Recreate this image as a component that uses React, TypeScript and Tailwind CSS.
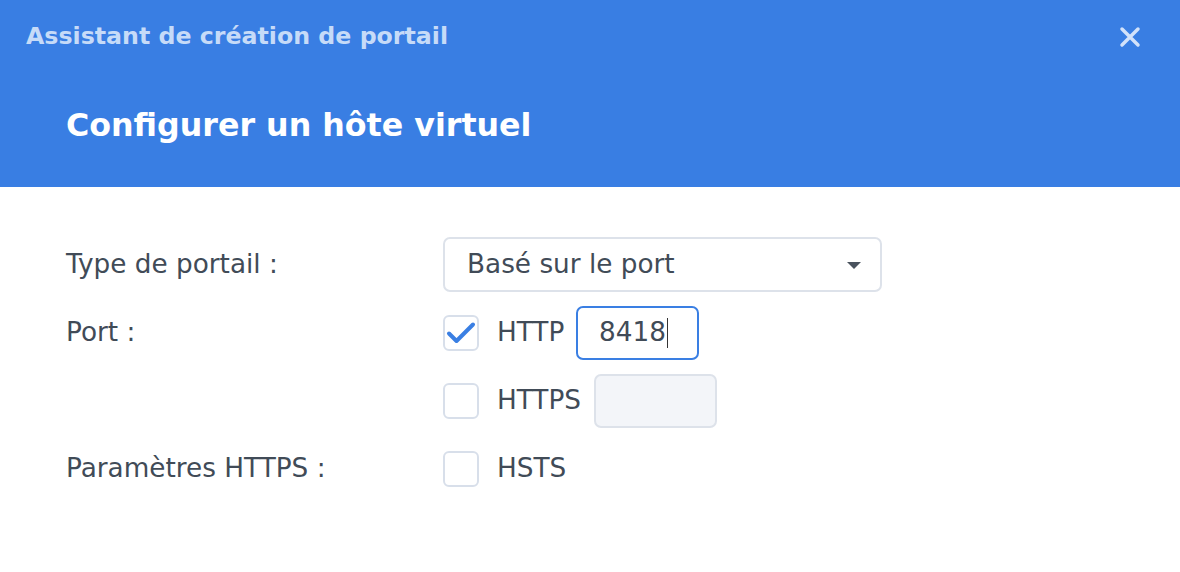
const font = { fontFamily: '"DejaVu Sans", Verdana, sans-serif' }

const Checkbox = ({ checked }: { checked?: boolean }) => (
  <div className="w-[36px] h-[36px] rounded-[6px] border-2 border-[#d8dfea] bg-white flex items-center justify-center shrink-0">
    {checked && (
      <svg width="30" height="30" viewBox="0 0 30 30" fill="none">
        <path d="M3 15.5 L10.5 23 L27 6.5" stroke="#3a7fe3" strokeWidth="4" strokeLinecap="round" strokeLinejoin="round" />
      </svg>
    )}
  </div>
)

const Row = ({ label, children }: { label?: string; children: React.ReactNode }) => (
  <div className="flex items-center min-h-[54px]">
    <div className="w-[377px] shrink-0 text-[26.3px] text-[#414b57]">{label}</div>
    <div className="flex items-center">{children}</div>
  </div>
)

export default function App() {
  return (
    <div className="w-[1180px] h-[572px] bg-white overflow-hidden" style={font}>
      <div className="bg-[#397ee3] h-[187px] relative">
        <div className="pl-[26px] pt-[20px] text-[23.7px] font-bold text-[#c6dbf8] leading-[32px]">
          Assistant de création de portail
        </div>
        <div className="pl-[66px] pt-[52px] text-[31.7px] font-bold text-white leading-[42px]">
          Configurer un hôte virtuel
        </div>
        <svg className="absolute left-[1119px] top-[26px]" width="22" height="22" viewBox="0 0 22 22">
          <path d="M3 3 L19 19 M19 3 L3 19" stroke="#d2e2fa" strokeWidth="3.5" strokeLinecap="round" />
        </svg>
      </div>

      <div className="pt-[50px] pl-[66px] flex flex-col gap-[14px] text-[#414b57]">
        <Row label="Type de portail :">
          <div className="w-[439px] h-[55px] rounded-[7px] border-2 border-[#dde2ea] flex items-center justify-between pl-[22px] pr-[18px]">
            <span className="text-[26.3px]">Basé sur le port</span>
            <svg width="16" height="10" viewBox="0 0 16 10">
              <path d="M1 2 L15 2 L8 9 Z" fill="#4a535e" />
            </svg>
          </div>
        </Row>
        <Row label="Port :">
          <div className="w-[133px] flex items-center gap-[18px]">
            <Checkbox checked />
            <span className="text-[26.3px]">HTTP</span>
          </div>
          <div className="w-[123px] h-[54px] rounded-[7px] border-2 border-[#3a7fe3] flex items-center pl-[21px] text-[26.3px]">
            8418<span className="w-[1.5px] h-[30px] bg-[#333] ml-[1px]" />
          </div>
        </Row>
        <Row>
          <div className="w-[151px] flex items-center gap-[18px]">
            <Checkbox />
            <span className="text-[26.3px]">HTTPS</span>
          </div>
          <div className="w-[123px] h-[54px] rounded-[7px] border-2 border-[#dde2ea] bg-[#f3f5f9]" />
        </Row>
        <Row label="Paramètres HTTPS :">
          <div className="flex items-center gap-[18px]">
            <Checkbox />
            <span className="text-[26.3px]">HSTS</span>
          </div>
        </Row>
      </div>
    </div>
  )
}
